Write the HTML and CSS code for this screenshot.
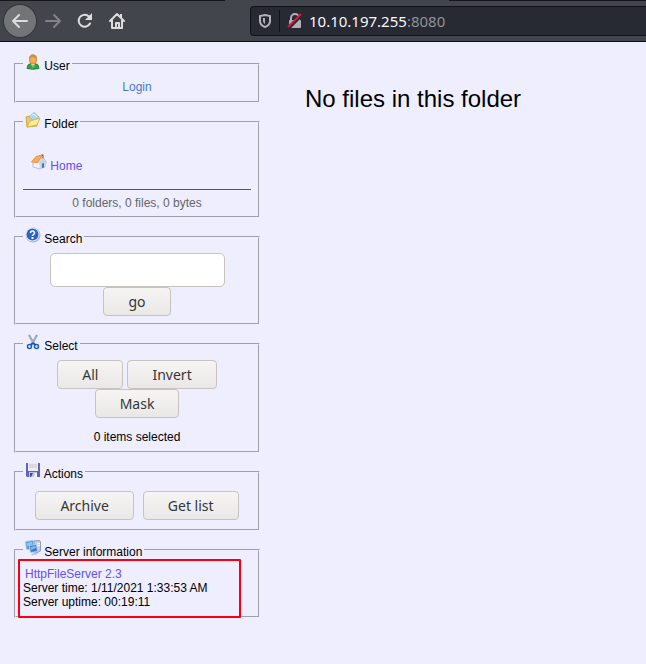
FILE: index.html
```html
<!DOCTYPE html>
<html lang="en">
<head>
<meta charset="utf-8">
<title>HFS /</title>
<link rel="stylesheet" href="styles.css">
</head>
<body>
<header class="toolbar">
  <nav class="nav">
    <button class="nav-btn back" aria-label="Back"><svg width="18" height="18" viewBox="0 0 18 18"><path d="M16 9H2M8 3L2 9l6 6"/></svg></button>
    <button class="nav-btn forward" aria-label="Forward"><svg width="18" height="18" viewBox="0 0 18 18"><path d="M2 9h14M10 3l6 6-6 6"/></svg></button>
    <button class="nav-btn" aria-label="Reload"><svg width="18" height="18" viewBox="0 0 18 18"><path d="M14 11.500A6 6 0 1 1 13 4.500"/><path class="solid" d="M16 1v7H9z"/></svg></button>
    <button class="nav-btn" aria-label="Home"><svg width="18" height="18" viewBox="0 0 18 18"><path d="M2 9l7-7 7 7M4 8v8h10V8M8 16v-5h3v5"/><path class="solid" d="M12 2h2v4h-2z"/></svg></button>
  </nav>
  <div class="address">
    <svg class="shield" width="14" height="16" viewBox="0 0 14 16"><path d="M7 2L12 3v5c0 3-2 5-5 6-3-1-5-3-5-6V3z" fill="none" stroke="#b1b1b5" stroke-width="2"/><path d="M7 5v6C5.500 10 5 9 5 7.500V5z" fill="#b1b1b5"/></svg>
    <span class="divider"></span>
    <svg class="lock" width="16" height="16" viewBox="0 0 16 16"><path d="M4 7V5a4 4 0 0 1 8 0v2" fill="none" stroke="#b1b1b5" stroke-width="2"/><rect x="2" y="7" width="12" height="8" rx="1" fill="#b1b1b5"/><path d="M2 15L15 2" stroke="#272933" stroke-width="3"/><path d="M1 14L14 1" stroke="#e8123c" stroke-width="2"/></svg>
    <span class="url">10.10.197.255<span class="port">:8080</span></span>
  </div>
</header>
<div class="page">
  <aside class="panel">
    <fieldset>
      <legend><svg class="icon" viewBox="0 0 16 16"><path d="M2 14.500q0-4.500 4-5h4q4 .5 4 5-6 1.500-12 0z" fill="#36a447" stroke="#23853a"/><path d="M6 9.500h4l-2 5z" fill="#eaf7e5"/><path d="M7.500 11h1l.5 3-1 1-1-1z" fill="#4fae4d"/><ellipse cx="8" cy="5.500" rx="3.500" ry="4.500" fill="#fba84a" stroke="#d08830"/><path d="M4 5.500Q4 .5 8 .5t4 5q-1-2.500-4-2.500T4 5.500z" fill="#b99358"/></svg> User</legend>
      <div class="center"><a class="login" href="#login">Login</a></div>
    </fieldset>
    <fieldset class="folder">
      <legend><svg class="icon" viewBox="0 0 16 16"><path d="M1 5l4-1 2 2 5-1v9L2 15z" fill="#eccb60" stroke="#cba847"/><path d="M4 5l5-4.500 5 4.500-4 5z" fill="#a9d7f4" stroke="#8dbfe2"/><path d="M6 4l3-2 3 3" fill="none" stroke="#e7f6ff"/><path d="M2 15l3-6 10-3-3 7z" fill="#ffeb92" stroke="#d9b650"/></svg> Folder</legend>
      <div class="home"><a href="#home"><svg class="icon" viewBox="0 0 16 16"><path d="M2 8l5-4h3l4 4v5l-5 2-7-2z" fill="#eef2fb" stroke="#b3c1d9"/><path d="M8 8l3-4 4 4v5l-6 2z" fill="#c2d7ee"/><path d="M11 9.500l2-.5v4.500l-2 .5z" fill="#5273a3"/><path d="M10.500.5h2V5l-2-1.500z" fill="#d02e2c"/><path d="M.5 8L5 2.500 11 1 7 8.500z" fill="#ffad55" stroke="#ee9242"/><path d="M11 2l4.500 6.500" stroke="#a7b4cb"/></svg> Home</a></div>
      <div class="center stats">0 folders, 0 files, 0 bytes</div>
    </fieldset>
    <fieldset>
      <legend><svg class="icon" viewBox="0 0 16 16"><circle cx="8" cy="8" r="7.500" fill="#a3adbf"/><circle cx="7.500" cy="7.500" r="7" fill="#e7edf9"/><circle cx="7.500" cy="7.500" r="6" fill="#2b62cc"/><path d="M5.500 6q0-2 2-2t2 2q0 1-2 2.500V9" fill="none" stroke="#fff" stroke-width="1.500"/><path d="M6.500 10h2v2h-2z" fill="#fff"/></svg> Search</legend>
      <form class="center search"><input type="text" aria-label="Search"><button type="button">go</button></form>
    </fieldset>
    <fieldset>
      <legend><svg class="icon" viewBox="0 0 16 16"><path d="M4 1l5 9M12 1L7 10" stroke="#8d9bab" stroke-width="2"/><path d="M4.500 2L8 8l3.500-6" fill="none" stroke="#c3ced9" stroke-width=".5"/><path d="M8 9l-2.500 2M8 9l2.500 2" stroke="#1554b4" stroke-width="2"/><circle cx="4.500" cy="12.500" r="2" fill="none" stroke="#1a5bbd" stroke-width="1.500"/><circle cx="11.500" cy="12.500" r="2" fill="none" stroke="#1a5bbd" stroke-width="1.500"/></svg> Select</legend>
      <div class="buttons"><button>All</button><button>Invert</button><button>Mask</button></div>
      <div class="center selected">0 items selected</div>
    </fieldset>
    <fieldset class="action-group">
      <legend><svg class="icon" viewBox="0 0 16 16"><path d="M1 1h14v14H2l-1-1z" fill="#6462bd"/><path d="M3 1h10v8H3z" fill="#ececef"/><path d="M4 3h8M4 5h8" stroke="#c9c9cc"/><path d="M4 10h8v5H4z" fill="#c2c5e5"/><path d="M5 11h3l-2 4H5z" fill="#4545a5"/><path d="M10 11h2v4H9z" fill="#f7f7ff"/></svg> Actions</legend>
      <div class="buttons actions"><button>Archive</button><button>Get list</button></div>
    </fieldset>
    <fieldset>
      <legend><svg class="icon" viewBox="0 0 16 16"><path d="M9 1l5-.5 1.500 1V11l-4 2-2.500-1z" fill="#c3ccdc" stroke="#8e9db8"/><path d="M12 4l3-.5M12 6l3-.5" stroke="#fff"/><path d="M.5 1.500l8-1 1 8-8 1z" fill="#4c97e0" stroke="#b4c7e3"/><path d="M2 3l5-1 .5 2L2 6z" fill="#85cbfa"/><path d="M4 5.500l7.500-1 1 7-7 1z" fill="#3477d2" stroke="#bccde7"/><path d="M5.500 7l5-1 .5 2-5 2z" fill="#78bdf7"/><path d="M6 14l5-1 2 1-6 1.500z" fill="#b5bfd0"/></svg> Server information</legend>
      <div class="server"><a href="#hfs">HttpFileServer 2.3</a><span>Server time: 1/11/2021 1:33:53 AM</span><span>Server uptime: 00:19:11</span></div>
    </fieldset>
  </aside>
  <main>No files in this folder</main>
</div>
</body>
</html>
```
FILE: styles.css
```css
* {
  box-sizing: border-box;
}

body {
  margin: 0;
  background: #eef;
  color: #000;
  font: 12px/14px "Liberation Sans", Arial, sans-serif;
}

a {
  color: #6650f5;
  text-decoration: none;
}

.toolbar {
  position: relative;
  display: flex;
  height: 42px;
  padding-left: 4px;
  background: #42454c;
  border-top: 1px solid #15161c;
  border-bottom: 1px solid #0c0d12;
}

.toolbar::before {
  content: "";
  position: absolute;
  top: -1px;
  left: 225px;
  width: 224px;
  height: 1px;
  background: #42454c;
}

.nav {
  display: flex;
  align-items: center;
  flex: 0 0 246px;
}

.nav-btn {
  display: flex;
  align-items: center;
  justify-content: center;
  width: 32px;
  height: 32px;
  padding: 0;
  border: 0;
  border-radius: 50%;
  background: none;
  fill: none;
  stroke: #dcdcda;
  stroke-width: 2;
  stroke-linecap: round;
  stroke-linejoin: round;
}

.back {
  background: #737478;
  box-shadow: 0 0 0 1px #33353b;
}

.forward {
  margin-left: 1px;
  stroke: #818388;
}

.solid {
  fill: #dcdcda;
  stroke: none;
}

.address {
  display: flex;
  align-items: center;
  flex: 1;
  height: 30px;
  margin: 5px 0 0;
  padding-left: 7px;
  background: #272933;
  border: 1px solid #111218;
  border-right: 0;
  border-radius: 4px 0 0 4px;
}

.divider {
  width: 1px;
  height: 22px;
  margin: 0 7px;
  background: #111218;
}

.url {
  margin-left: 6px;
  color: #f8f8fa;
  font: 15px/20px "Noto Sans", sans-serif;
}

.port {
  color: #919195;
}

.page {
  display: flex;
  align-items: flex-start;
  padding: 12px 14px;
}

.panel {
  display: flex;
  flex-direction: column;
  flex: 0 0 246px;
  gap: 9px;
}

fieldset {
  min-width: 0;
  margin: 0;
  padding: 7px;
  border: 2px groove #eef;
}

.folder {
  padding-bottom: 6px;
}

.action-group {
  padding-bottom: 9px;
}

legend {
  padding: 0 2px;
}

.icon {
  width: 16px;
  height: 16px;
  vertical-align: baseline;
}

.center {
  text-align: center;
}

.login {
  color: #4679d1;
}

.home {
  padding: 16px 8px;
  border-bottom: 1px solid #555;
}

.stats {
  padding-top: 6px;
  color: #666;
}

.panel button {
  height: 29px;
  padding: 0 24px;
  border: 1px solid #c8c3bf;
  border-radius: 4px;
  background: linear-gradient(#f6f5f4, #e9e8e6);
  color: #333739;
  font: 14px/20px "Noto Sans", sans-serif;
}

.search {
  display: flex;
  flex-direction: column;
  align-items: center;
}

.search input {
  width: 175px;
  height: 34px;
  padding: 6px;
  border: 1px solid #c8c3bf;
  border-radius: 5px;
  background: #fff;
}

.buttons {
  display: flex;
  flex-wrap: wrap;
  justify-content: center;
  column-gap: 4px;
}

.selected {
  padding-top: 12px;
}

.actions {
  padding-top: 3px;
  column-gap: 9px;
}

.server {
  position: relative;
  display: flex;
  flex-direction: column;
  padding-top: 1px;
}

.server a {
  padding-left: 2px;
}

.server::after {
  content: "";
  position: absolute;
  inset: -7px 10px -9px -5px;
  border: 2px solid #f80012;
  border-radius: 1px;
}

main {
  flex: 1;
  padding: 31px 0 0 45px;
  font-size: 24px;
  line-height: 28px;
}
```
